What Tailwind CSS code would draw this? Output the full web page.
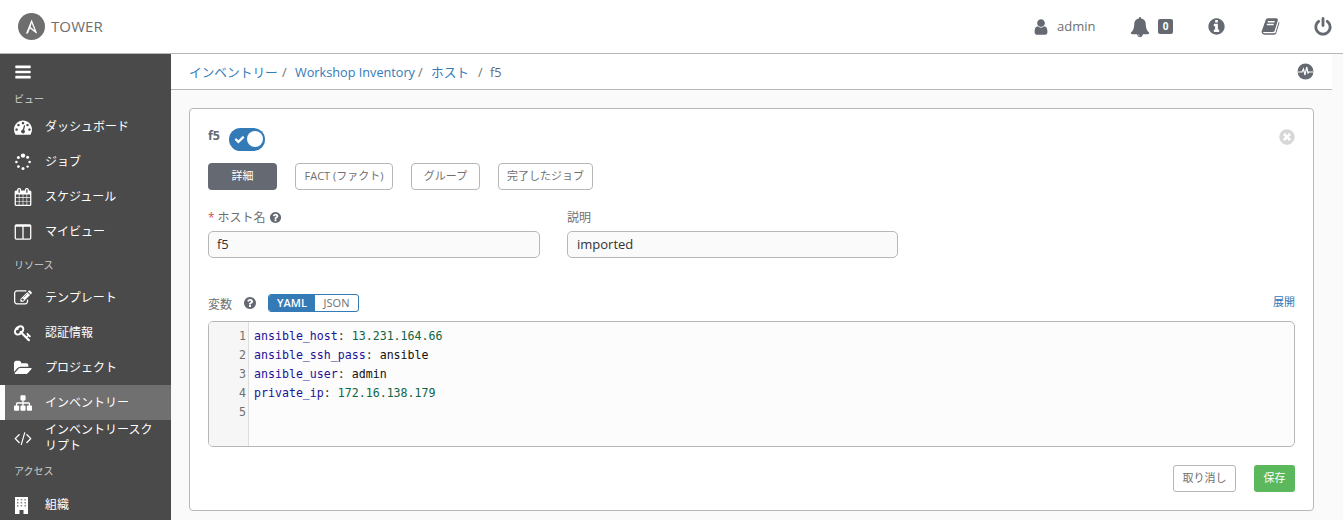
<!doctype html>
<html lang="ja"><head><meta charset="utf-8"><script src="https://cdn.jsdelivr.net/npm/@tailwindcss/browser@4"></script></head>
<body class="h-[520px] w-[1343px] overflow-hidden bg-white font-['Open_Sans','Noto_Sans_CJK_JP',sans-serif] text-[#707070]">
<header class="flex h-[54px] items-center border-b border-[#b7b7b7] bg-white">
  <svg class="ml-[18px] h-[27px] w-[27px]" viewBox="0 0 27 27"><circle cx="13.5" cy="13.5" r="13.5" fill="#6e6e6e"/><path d="M13.6 6.5 L8 20.5 H9.9 L12 15.4 L18 20.3 Q19.3 21 18.8 19.4 Z M13.6 10 L16.5 17.2 L12.6 14 Z" fill="#fff"/></svg>
  <span class="ml-[6px] text-[15px] tracking-[0.1px] text-[#6e6e6e]">TOWER</span>
  <div class="ml-auto flex items-center text-[#646972]">
    <svg class="h-[18px] w-[18px]" viewBox="0 0 1792 1792" fill="currentColor"><path d="M1536 1399q0 109-62.5 187t-150.5 78H469q-88 0-150.5-78T256 1399q0-85 8.5-160.5t31.5-152 58.5-131 94-89T583 832q131 128 313 128t313-128q76 0 134.5 34.5t94 89 58.5 131 31.5 152 8.5 160.5zm-256-887q0 159-112.5 271.5T896 896 624.5 783.5 512 512t112.5-271.5T896 128t271.5 112.5T1280 512z"/></svg>
    <span class="ml-[7px] w-[38px] text-[13px] text-[#707070]">admin</span>
    <svg class="ml-[35px] h-[20px] w-[20px]" viewBox="0 0 1792 1792" fill="currentColor"><path d="M912 1696q0-16-16-16-59 0-101.5-42.5T752 1536q0-16-16-16t-16 16q0 73 51.5 124.5T896 1712q16 0 16-16zm816-288q0 52-38 90t-90 38h-448q0 106-75 181t-181 75-181-75-75-181H192q-52 0-90-38t-38-90q50-42 91-88t85-119.5 74.5-158.5 50-206T384 576q0-152 117-282.5T808 135q-8-19-8-39 0-40 28-68t68-28 68 28 28 68q0 20-8 39 190 28 307 158.5T1408 576q0 139 19.5 260t50 206 74.5 158.5 85 119.5 91 88z"/></svg>
    <span class="ml-[8px] flex h-[15px] w-[15px] items-center justify-center rounded-[2px] bg-[#646972] text-[10px] font-bold text-white">0</span>
    <svg class="ml-[34px] h-[19px] w-[19px]" viewBox="0 0 1792 1792" fill="currentColor"><path d="M1152 1376v-160q0-14-9-23t-23-9h-96V672q0-14-9-23t-23-9H672q-14 0-23 9t-9 23v160q0 14 9 23t23 9h96v320h-96q-14 0-23 9t-9 23v160q0 14 9 23t23 9h448q14 0 23-9t9-23zm-128-896V320q0-14-9-23t-23-9H800q-14 0-23 9t-9 23v160q0 14 9 23t23 9h192q14 0 23-9t9-23zm640 416q0 209-103 385.5T1281.5 1561 896 1664t-385.5-103T231 1281.5 128 896t103-385.5T510.5 231 896 128t385.5 103T1561 510.5 1664 896z"/></svg>
    <svg class="ml-[35px] h-[19px] w-[19px]" viewBox="0 0 1792 1792" fill="currentColor"><path d="M1703 478q40 57 18 129l-275 906q-19 64-76.5 107.5T1247 1664H324q-77 0-148.5-53.5T76 1479q-24-67-2-127 0-4 3-27t4-37q1-8-3-21.5t-3-19.5q2-11 8-21t16.5-23.5T116 1179q23-38 45-91.5t30-91.5q3-10 .5-30t-.5-28q3-11 17-28t17-23q21-36 42-92t25-90q1-9-2.5-32t.5-28q4-13 22-30.5t22-22.5q19-26 42.5-84.5T404 411q1-8-3-25.5t-2-26.5q2-8 9-18t18-23 17-21q8-12 16.5-30.5t15-35 16-36 19.5-32T557.5 140t36-11.5T642 134l-1 3q38-9 51-9h761q74 0 114 56t18 130l-274 906q-36 119-71.5 153.5T1111 1408H242q-27 0-38 15-11 16-1 43 24 70 144 70h923q29 0 56-15.5t35-41.5l300-987q7-22 5-57 38 15 59 43zm-1064 2q-4 13 2 22.5t20 9.5h608q13 0 25.5-9.5T1272 480l21-64q4-13-2-22.5t-20-9.5H663q-13 0-25.5 9.5T621 416zm-83 256q-4 13 2 22.5t20 9.5h608q13 0 25.5-9.5T1189 736l21-64q4-13-2-22.5t-20-9.5H580q-13 0-25.5 9.5T538 672z"/></svg>
    <svg class="ml-[33px] mr-[10px] h-[20px] w-[20px]" viewBox="0 0 1792 1792" fill="currentColor"><path d="M1664 896q0 156-61 298t-164 245-245 164-298 61-298-61-245-164-164-245-61-298q0-182 80.5-343T433 283q43-32 95.5-25t83.5 50q32 42 24.5 94.5T586 487q-98 74-151.5 181T381 896q0 104 40.5 198.5T531 1258t163.5 109.5T893 1408t198.5-40.5T1255 1258t109.5-163.5T1405 896q0-121-53.5-228T1200 487q-43-32-50.5-84.5T1174 308q31-43 83.5-50t95.5 25q133 97 213.5 258T1664 896zm-640-768v640q0 52-38 90t-90 38-90-38-38-90V128q0-52 38-90t90-38 90 38 38 90z"/></svg>
  </div>
</header>
<div class="flex h-[466px]">
  <nav class="h-full w-[171px] shrink-0 overflow-hidden bg-[#4a4a4a] text-[12px] text-white">
    <div class="flex h-[35px] items-center pl-[14px]"><svg class="h-[18px] w-[18px]" viewBox="0 0 1792 1792" fill="#fff"><path d="M1664 1344v128q0 26-19 45t-45 19H192q-26 0-45-19t-19-45v-128q0-26 19-45t45-19h1408q26 0 45 19t19 45zm0-512v128q0 26-19 45t-45 19H192q-26 0-45-19t-19-45V832q0-26 19-45t45-19h1408q26 0 45 19t19 45zm0-512v128q0 26-19 45t-45 19H192q-26 0-45-19t-19-45V320q0-26 19-45t45-19h1408q26 0 45 19t19 45z"/></svg></div>
    <div class="flex h-[20px] items-center pl-[14px] pt-[1px] text-[10px] text-[#d0d0d0]">ビュー</div>
    <a class="flex h-[35px] items-center pl-[14px]"><svg class="h-[18px] w-[18px] shrink-0" viewBox="0 0 1792 1792" fill="#fff"><path d="M384 1152q0-53-37.5-90.5T256 1024t-90.5 37.5T128 1152t37.5 90.5T256 1280t90.5-37.5T384 1152zm192-448q0-53-37.5-90.5T448 576t-90.5 37.5T320 704t37.5 90.5T448 832t90.5-37.5T576 704zm428 481l101-382q6-26-7.5-48.5T1059 725t-48 6.5-30 39.5l-101 382q-60 5-107 43.5t-63 98.5q-20 77 20 146t117 89 146-20 89-117q16-60-6-117t-72-91zm660-33q0-53-37.5-90.5T1536 1024t-90.5 37.5-37.5 90.5 37.5 90.5 90.5 37.5 90.5-37.5 37.5-90.5zm-640-640q0-53-37.5-90.5T896 384t-90.5 37.5T768 512t37.5 90.5T896 640t90.5-37.5T1024 512zm448 192q0-53-37.5-90.5T1344 576t-90.5 37.5T1216 704t37.5 90.5 90.5 37.5 90.5-37.5T1472 704zm320 448q0 261-141 483-19 29-54 29H195q-35 0-54-29Q0 1414 0 1152q0-182 71-348t191-286 286-191 348-71 348 71 286 191 191 286 71 348z"/></svg><span class="ml-[13px]">ダッシュボード</span></a>
    <a class="flex h-[35px] items-center pl-[14px]"><svg class="h-[18px] w-[18px] shrink-0" viewBox="0 0 18 18" fill="#fff"><circle cx="9" cy="2.6" r="2.2"/><circle cx="13.6" cy="4.2" r="1.5"/><circle cx="15.6" cy="9" r="1.3"/><circle cx="13.6" cy="13.6" r="1.2"/><circle cx="9" cy="15.5" r="1.5"/><circle cx="4.4" cy="13.6" r="1.4"/><circle cx="2.4" cy="9" r="1.3"/><circle cx="4.4" cy="4.4" r="1.5"/></svg><span class="ml-[13px]">ジョブ</span></a>
    <a class="flex h-[35px] items-center pl-[14px]"><svg class="h-[18px] w-[18px] shrink-0" viewBox="0 0 1792 1792" fill="#fff"><path fill-rule="evenodd" d="M192 1664h288v-288H192v288zm352 0h320v-288H544v288zm-352-352h288V992H192v320zm352 0h320V992H544v320zM192 928h288V640H192v288zm736 736h320v-288H928v288zM544 928h320V640H544v288zm768 736h288v-288h-288v288zm-384-352h320V992H928v320zM576 448V160q0-13-9.5-22.5T544 128h-64q-13 0-22.5 9.5T448 160v288q0 13 9.5 22.5T480 480h64q13 0 22.5-9.5T576 448zm736 864h288V992h-288v320zM928 928h320V640H928v288zm384 0h288V640h-288v288zm32-480V160q0-13-9.5-22.5T1312 128h-64q-13 0-22.5 9.5T1216 160v288q0 13 9.5 22.5t22.5 9.5h64q13 0 22.5-9.5t9.5-22.5zm384-64v1280q0 52-38 90t-90 38H192q-52 0-90-38t-38-90V384q0-52 38-90t90-38h128v-96q0-66 47-113T480 0h64q66 0 113 47t47 113v96h384v-96q0-66 47-113t113-47h64q66 0 113 47t47 113v96h128q52 0 90 38t38 90z"/></svg><span class="ml-[13px]">スケジュール</span></a>
    <a class="flex h-[35px] items-center pl-[14px]"><svg class="h-[18px] w-[18px] shrink-0" viewBox="0 0 1792 1792" fill="#fff"><path d="M224 1536h608V384H192v1120q0 13 9.5 22.5t22.5 9.5zm1376-32V384H960v1152h608q13 0 22.5-9.5t9.5-22.5zm128-1216v1216q0 66-47 113t-113 47H224q-66 0-113-47t-47-113V288q0-66 47-113t113-47h1344q66 0 113 47t47 113z"/></svg><span class="ml-[13px]">マイビュー</span></a>
    <div class="flex h-[31px] items-center pl-[14px] pt-[1px] text-[10px] text-[#d0d0d0]">リソース</div>
    <a class="flex h-[35px] items-center pl-[14px]"><svg class="h-[18px] w-[18px] shrink-0" viewBox="0 0 1792 1792" fill="#fff"><path d="M888 1184l116-116-152-152-116 116v56h96v96h56zm440-720q-16-16-33 1L945 815q-17 17-1 33t33-1l350-350q17-17 1-33zm80 594v190q0 119-84.5 203.5T1120 1536H288q-119 0-203.5-84.5T0 1248V416q0-119 84.5-203.5T288 128h832q63 0 117 25 15 7 18 23 3 17-9 29l-49 49q-14 14-32 8-23-6-45-6H288q-66 0-113 47t-47 113v832q0 66 47 113t113 47h832q66 0 113-47t47-113v-126q0-13 9-22l64-64q15-15 35-7t20 29zm-96-738l288 288-672 672H640V992zm444 132l-92 92-288-288 92-92q28-28 68-28t68 28l152 152q28 28 28 68t-28 68z"/></svg><span class="ml-[13px]">テンプレート</span></a>
    <a class="flex h-[35px] items-center pl-[14px]"><svg class="h-[18px] w-[18px] shrink-0" viewBox="0 0 1792 1792" fill="#fff"><path d="M832 512q0-80-56-136t-136-56-136 56-56 136q0 42 19 83-41-19-83-19-80 0-136 56t-56 136 56 136 136 56 136-56 56-136q0-42-19-83 41 19 83 19 80 0 136-56t56-136zm851 704q0 17-49 66t-66 49q-9 0-28.5-16t-36.5-33-38.5-40-24.5-26l-96 96 220 220q28 28 28 68 0 42-39 81t-81 39q-40 0-68-28l-671-671q-176 131-365 131-163 0-265.5-102.5T0 784q0-160 95-313t248-248 313-95q163 0 265.5 102.5T1024 496q0 189-131 365l355 355 96-96q-3-3-26-24.5t-40-38.5-33-36.5-16-28.5q0-17 49-66t66-49q13 0 23 10 6 6 46 44.5t82 79.5 86.5 86 73 78 28.5 41z"/></svg><span class="ml-[13px]">認証情報</span></a>
    <a class="flex h-[35px] items-center pl-[14px]"><svg class="h-[18px] w-[18px] shrink-0" viewBox="0 0 1920 1792" fill="#fff"><path d="M1879 952q0 31-31 66l-336 396q-43 51-120.5 86.5T1248 1536H160q-34 0-60.5-13T73 1480q0-31 31-66l336-396q43-51 120.5-86.5T704 896h1088q34 0 60.5 13t26.5 43zM1536 608v160H704q-94 0-197 47.5T343 935L6 1331l-5 6q0-4-.5-12.5T0 1312V352q0-92 66-158t158-66h320q92 0 158 66t66 158v32h544q92 0 158 66t66 158z"/></svg><span class="ml-[13px]">プロジェクト</span></a>
    <a class="flex h-[35px] items-center border-l-[5px] border-white bg-[#707070] pl-[9px]"><svg class="h-[18px] w-[18px] shrink-0" viewBox="0 0 1792 1792" fill="#fff"><path d="M1792 1248v320q0 40-28 68t-68 28h-320q-40 0-68-28t-28-68v-320q0-40 28-68t68-28h96V960H960v192h96q40 0 68 28t28 68v320q0 40-28 68t-68 28H736q-40 0-68-28t-28-68v-320q0-40 28-68t68-28h96V960H320v192h96q40 0 68 28t28 68v320q0 40-28 68t-68 28H96q-40 0-68-28t-28-68v-320q0-40 28-68t68-28h96V960q0-52 38-90t90-38h512V640h-96q-40 0-68-28t-28-68V224q0-40 28-68t68-28h320q40 0 68 28t28 68v320q0 40-28 68t-68 28h-96v192h512q52 0 90 38t38 90v192h96q40 0 68 28t28 68z"/></svg><span class="ml-[13px]">インベントリー</span></a>
    <a class="flex h-[35px] items-center pl-[14px]"><svg class="h-[18px] w-[18px] shrink-0" viewBox="0 0 1920 1792" fill="#fff"><path d="M617 1399l-50 50q-10 10-23 10t-23-10L55 983q-10-10-10-23t10-23l466-466q10-10 23-10t23 10l50 50q10 10 10 23t-10 23L224 960l393 393q10 10 10 23t-10 23zm591-1067L835 1623q-4 13-15.5 19.5T796 1645l-62-17q-13-4-19.5-15.5T712 1588l373-1291q4-13 15.5-19.5t23.5-2.5l62 17q13 4 19.5 15.5t2.5 24.5zm657 651l-466 466q-10 10-23 10t-23-10l-50-50q-10-10-10-23t10-23l393-393-393-393q-10-10-10-23t10-23l50-50q10-10 23-10t23 10l466 466q10 10 10 23t-10 23z"/></svg><span class="ml-[13px] w-[110px] leading-[16px]">インベントリースクリプト</span></a>
    <div class="flex h-[32px] items-center pl-[14px] pt-[1px] text-[10px] text-[#d0d0d0]">アクセス</div>
    <a class="flex h-[35px] items-center pl-[14px]"><svg class="h-[18px] w-[18px] shrink-0" viewBox="0 0 18 18"><rect x="1" y="1" width="13" height="17" fill="#fff"/><g fill="#888"><rect x="3" y="3" width="1.5" height="1.5"/><rect x="6.7" y="3" width="1.5" height="1.5"/><rect x="10.4" y="3" width="1.5" height="1.5"/><rect x="3" y="6" width="1.5" height="1.5"/><rect x="6.7" y="6" width="1.5" height="1.5"/><rect x="10.4" y="6" width="1.5" height="1.5"/><rect x="3" y="9" width="1.5" height="1.5"/><rect x="6.7" y="9" width="1.5" height="1.5"/><rect x="10.4" y="9" width="1.5" height="1.5"/></g><rect x="5.5" y="14" width="4" height="4" fill="#4a4a4a"/></svg><span class="ml-[13px]">組織</span></a>
  </nav>
  <main class="flex h-full min-w-0 flex-1 flex-col bg-[#fafafa]">
    <div class="flex h-[36px] w-[1161px] shrink-0 items-center justify-between border-b border-[#b7b7b7] bg-white pl-[18px] pr-[18px] text-[12.7px] text-[#337ab7]">
      <div class="flex items-center whitespace-nowrap pt-[2px]"><span class="w-[89px]">インベントリー</span><span class="w-[17px] pl-[4px] text-[#707070]">/</span><span class="w-[120px]">Workshop Inventory</span><span class="w-[16px] pl-[3px] text-[#707070]">/</span><span class="w-[39px]">ホスト</span><span class="w-[20px] pl-[8px] text-[#707070]">/</span><span class="text-[#646972]">f5</span></div>
      <svg class="h-[17px] w-[17px]" viewBox="0 0 17 17"><circle cx="8.5" cy="8.5" r="8" fill="#646972"/><path d="M0.5 9H5L6.5 6L8 12L9.7 4L11 10L12 9H16.5" fill="none" stroke="#fff" stroke-width="1.2"/></svg>
    </div>
    <section class="ml-[18px] mt-[18px] h-[403px] w-[1125px] rounded-[4px] border border-[#b7b7b7] bg-white px-[18px] pt-[18px]">
      <div class="flex h-[24px] items-center">
        <span class="-mt-[5px] text-[12.5px] font-bold text-[#646972]">f5</span>
        <span class="ml-[9px] flex h-[23px] w-[36px] items-center justify-between rounded-full bg-[#337ab7] pl-[5px] pr-[2px]"><svg class="h-[11px] w-[11px]" viewBox="0 0 1792 1792" fill="#fff"><path d="M1671 566q0 40-28 68l-724 724-136 136q-28 28-68 28t-68-28l-136-136-362-362q-28-28-28-68t28-68l136-136q28-28 68-28t68 28l294 295 656-657q28-28 68-28t68 28l136 136q28 28 28 68z"/></svg><span class="h-[16px] w-[16px] rounded-full bg-white"></span></span>
        <svg class="-mr-[1px] -mt-[5px] ml-auto h-[18px] w-[18px]" viewBox="0 0 1792 1792" fill="#d7d7d7"><path d="M1277 1122q0-26-19-45L1077 896l181-181q19-19 19-45 0-27-19-46l-90-90q-19-19-46-19-26 0-45 19L896 715 715 534q-19-19-45-19-27 0-46 19l-90 90q-19 19-19 46 0 26 19 45l181 181-181 181q-19 19-19 45 0 27 19 46l90 90q19 19 46 19 26 0 45-19l181-181 181 181q19 19 45 19 27 0 46-19l90-90q19-19 19-46zm387-226q0 209-103 385.5T1281.5 1561 896 1664t-385.5-103T231 1281.5 128 896t103-385.5T510.5 231 896 128t385.5 103T1561 510.5 1664 896z"/></svg>
      </div>
      <div class="mt-[12px] flex h-[27px] gap-[18px] text-[11px]">
        <button class="w-[69px] rounded-[4px] bg-[#646972] text-white">詳細</button>
        <button class="w-[98px] rounded-[4px] border border-[#b7b7b7] bg-white text-[#707070]">FACT (ファクト)</button>
        <button class="w-[69px] rounded-[4px] border border-[#b7b7b7] bg-white text-[#707070]">グループ</button>
        <button class="w-[95px] rounded-[4px] border border-[#b7b7b7] bg-white text-[#707070]">完了したジョブ</button>
      </div>
      <div class="mt-[18px] flex gap-[27px]">
        <div class="w-[332px]">
          <label class="flex h-[23px] items-center pb-[4px] text-[12px]"><span class="mr-[3px] text-[#d9534f]">*</span>ホスト名<svg class="ml-[3px] h-[13px] w-[13px]" viewBox="0 0 1792 1792" fill="#646972"><path d="M1024 1376v-192q0-14-9-23t-23-9H800q-14 0-23 9t-9 23v192q0 14 9 23t23 9h192q14 0 23-9t9-23zm256-672q0-88-55.5-163T1086 425t-170-41q-243 0-371 213-15 24 8 42l132 100q7 6 19 6 16 0 25-12 53-68 86-92 34-24 86-24 48 0 85.5 26t37.5 59q0 38-20 61t-68 45q-63 28-115.5 86.5T768 1020v36q0 14 9 23t23 9h192q14 0 23-9t9-23q0-19 21.5-49.5T1100 957q32-18 49-28.5t46-35 44.5-48 28-60.5 12.5-81zm384 192q0 209-103 385.5T1281.5 1561 896 1664t-385.5-103T231 1281.5 128 896t103-385.5T510.5 231 896 128t385.5 103T1561 510.5 1664 896z"/></svg></label>
          <div class="flex h-[27px] items-center rounded-[5px] border border-[#b7b7b7] bg-[#fafafa] pl-[8px] text-[13px] text-[#333]">f5</div>
        </div>
        <div class="w-[331px]">
          <label class="flex h-[23px] items-center pb-[4px] text-[12px]">説明</label>
          <div class="flex h-[27px] items-center rounded-[5px] border border-[#b7b7b7] bg-[#fafafa] pl-[9px] text-[13px] text-[#333]">imported</div>
        </div>
      </div>
      <div class="mt-[36px] flex h-[18px] items-center">
        <span class="pt-[3px] text-[12px]">変数</span>
        <svg class="ml-[11px] h-[14px] w-[14px]" viewBox="0 0 1792 1792" fill="#646972"><path d="M1024 1376v-192q0-14-9-23t-23-9H800q-14 0-23 9t-9 23v192q0 14 9 23t23 9h192q14 0 23-9t9-23zm256-672q0-88-55.5-163T1086 425t-170-41q-243 0-371 213-15 24 8 42l132 100q7 6 19 6 16 0 25-12 53-68 86-92 34-24 86-24 48 0 85.5 26t37.5 59q0 38-20 61t-68 45q-63 28-115.5 86.5T768 1020v36q0 14 9 23t23 9h192q14 0 23-9t9-23q0-19 21.5-49.5T1100 957q32-18 49-28.5t46-35 44.5-48 28-60.5 12.5-81zm384 192q0 209-103 385.5T1281.5 1561 896 1664t-385.5-103T231 1281.5 128 896t103-385.5T510.5 231 896 128t385.5 103T1561 510.5 1664 896z"/></svg>
        <div class="ml-[11px] flex h-[18px] w-[91px] overflow-hidden rounded-[3px] border border-[#337ab7] text-[11px]"><span class="flex w-[46px] items-center justify-center bg-[#337ab7] font-semibold text-white">YAML</span><span class="flex flex-1 items-center justify-center text-[#707070]">JSON</span></div>
        <a class="-mt-[1px] ml-auto text-[11px] text-[#337ab7]">展開</a>
      </div>
      <div class="mt-[9px] flex h-[126px] overflow-hidden rounded-[5px] border border-[#b7b7b7] bg-[#fcfcfc] font-['DejaVu_Sans_Mono',monospace] text-[11.6px] leading-[19px]">
        <div class="w-[40px] shrink-0 border-r border-[#ddd] bg-[#f6f6f6] pr-[2px] pt-[5px] text-right text-[#707070]"><div>1</div><div>2</div><div>3</div><div>4</div><div>5</div></div>
        <div class="pl-[5px] pt-[5px] text-[#333]">
          <div><span class="text-[#221199]">ansible_host</span>: <span class="text-[#116644]">13.231.164.66</span></div>
          <div><span class="text-[#221199]">ansible_ssh_pass</span>: <span class="text-[#111]">ansible</span></div>
          <div><span class="text-[#221199]">ansible_user</span>: <span class="text-[#111]">admin</span></div>
          <div><span class="text-[#221199]">private_ip</span>: <span class="text-[#116644]">172.16.138.179</span></div>
        </div>
      </div>
      <div class="mt-[18px] flex justify-end gap-[18px] text-[11px]">
        <button class="h-[27px] w-[63px] rounded-[3px] border border-[#b7b7b7] bg-white text-[#707070]">取り消し</button>
        <button class="h-[27px] w-[41px] rounded-[3px] bg-[#5cb85c] text-white">保存</button>
      </div>
    </section>
  </main>
</div>
</body></html>
